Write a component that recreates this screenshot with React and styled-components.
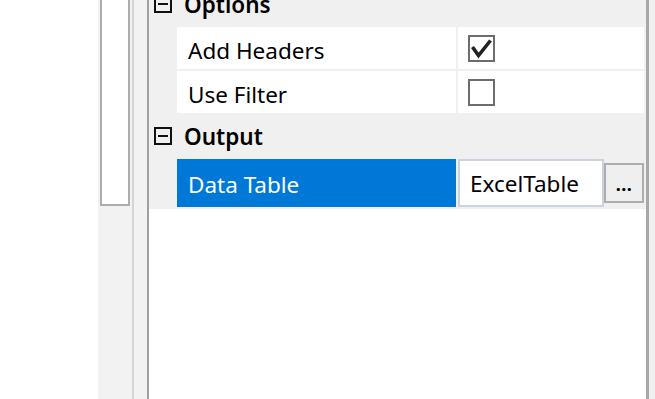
import styled, { createGlobalStyle } from "styled-components";

const GlobalStyle = createGlobalStyle`
  html, body {
    margin: 0;
    padding: 0;
    background: #ffffff;
    overflow: hidden;
  }
  body {
    font-family: "Noto Sans", "Open Sans", "Liberation Sans", sans-serif;
  }
`;

const Page = styled.div`
  display: flex;
  width: 655px;
  height: 399px;
  overflow: hidden;
  background: #ffffff;
`;

const Blank = styled.div`
  width: 98px;
  flex: none;
  background: #ffffff;
`;

const SidePanel = styled.div`
  width: 49px;
  flex: none;
  display: flex;
  background: #f2f2f2;
  padding-left: 2px;
  box-sizing: border-box;
`;

const ListBox = styled.div`
  width: 30px;
  height: 206px;
  box-sizing: border-box;
  background: #ffffff;
  border: 2px solid #adadad;
  border-top: none;
`;

const Splitter = styled.div`
  width: 2px;
  margin-left: 2px;
  background: #d4d4d4;
`;

const Grid = styled.div`
  width: 502px;
  flex: none;
  box-sizing: border-box;
  border-left: 2px solid #a0a0a0;
  border-right: 3px solid #a8a8a8;
  background: #ffffff;
`;

const Rows = styled.div`
  margin-top: -17px;
  background: #f0f0f0;
`;

const Row = styled.div`
  display: grid;
  grid-template-columns: 26px 279px 186px;
  column-gap: 2px;
  padding-right: 2px;
  padding-bottom: 2px;
  height: ${(p) => p.$h || 42}px;
`;

const CategoryRow = styled.div`
  display: flex;
  align-items: center;
  height: 42px;
  padding: 0 0 2px 5px;
`;

const Toggle = styled.div`
  width: 18px;
  height: 18px;
  box-sizing: border-box;
  border: 2px solid #111;
  display: flex;
  align-items: center;
  justify-content: center;
  margin-right: 12px;
  &::after {
    content: "";
    width: 10px;
    height: 2px;
    background: #111;
  }
`;

const CategoryLabel = styled.span`
  font-size: 22.5px;
  font-weight: 600;
  color: #000;
`;

const NameCell = styled.div`
  display: flex;
  align-items: center;
  padding: ${(p) => (p.$selected ? 2 : 4)}px 0 0 11px;
  font-size: 22.5px;
  color: ${(p) => (p.$selected ? "#ffffff" : "#000000")};
  background: ${(p) => (p.$selected ? "#0078d7" : "#ffffff")};
  white-space: nowrap;
`;

const ValueCell = styled.div`
  display: flex;
  align-items: center;
  padding-left: ${(p) => (p.$flush ? 0 : 10)}px;
  background: ${(p) => (p.$flush ? "#f0f0f0" : "#ffffff")};
`;

const CheckBox = styled.div`
  width: 27px;
  height: 27px;
  box-sizing: border-box;
  border: 2px solid #6d6d6d;
  background: #ffffff;
  display: flex;
  align-items: center;
  justify-content: center;
`;

const Editor = styled.div`
  width: 146px;
  height: 100%;
  box-sizing: border-box;
  border: 2px solid #ccd3e0;
  background: #ffffff;
  display: flex;
  align-items: center;
  padding-left: 10px;
  font-size: 22.5px;
  color: #000;
`;

const DotsButton = styled.div`
  width: 40px;
  height: 40px;
  box-sizing: border-box;
  border: 2px solid #adadad;
  background: #efefef;
  display: flex;
  align-items: flex-end;
  justify-content: center;
  padding-bottom: 8px;
  font-size: 18px;
  font-weight: 700;
  line-height: 1;
  letter-spacing: 0.5px;
  color: #000;
`;

const Outside = styled.div`
  flex: 1;
  background: #f0f0f0;
`;

function Check() {
  return (
    <svg width="23" height="23" viewBox="0 0 23 23">
      <polyline
        points="2.5,10 8.5,18.5 20.5,3.5"
        fill="none"
        stroke="#222"
        strokeWidth="3.6"
        strokeLinejoin="miter"
      />
    </svg>
  );
}

export default function App() {
  return (
    <>
      <GlobalStyle />
      <Page>
        <Blank />
        <SidePanel>
          <ListBox />
          <Splitter />
        </SidePanel>
        <Grid>
          <Rows>
            <CategoryRow>
              <Toggle />
              <CategoryLabel>Options</CategoryLabel>
            </CategoryRow>
            <Row>
              <div />
              <NameCell>Add Headers</NameCell>
              <ValueCell>
                <CheckBox>
                  <Check />
                </CheckBox>
              </ValueCell>
            </Row>
            <Row>
              <div />
              <NameCell>Use Filter</NameCell>
              <ValueCell>
                <CheckBox />
              </ValueCell>
            </Row>
            <CategoryRow>
              <Toggle />
              <CategoryLabel>Output</CategoryLabel>
            </CategoryRow>
            <Row $h={48}>
              <div />
              <NameCell $selected>Data Table</NameCell>
              <ValueCell $flush>
                <Editor>ExcelTable</Editor>
                <DotsButton>...</DotsButton>
              </ValueCell>
            </Row>
          </Rows>
        </Grid>
        <Outside />
      </Page>
    </>
  );
}
